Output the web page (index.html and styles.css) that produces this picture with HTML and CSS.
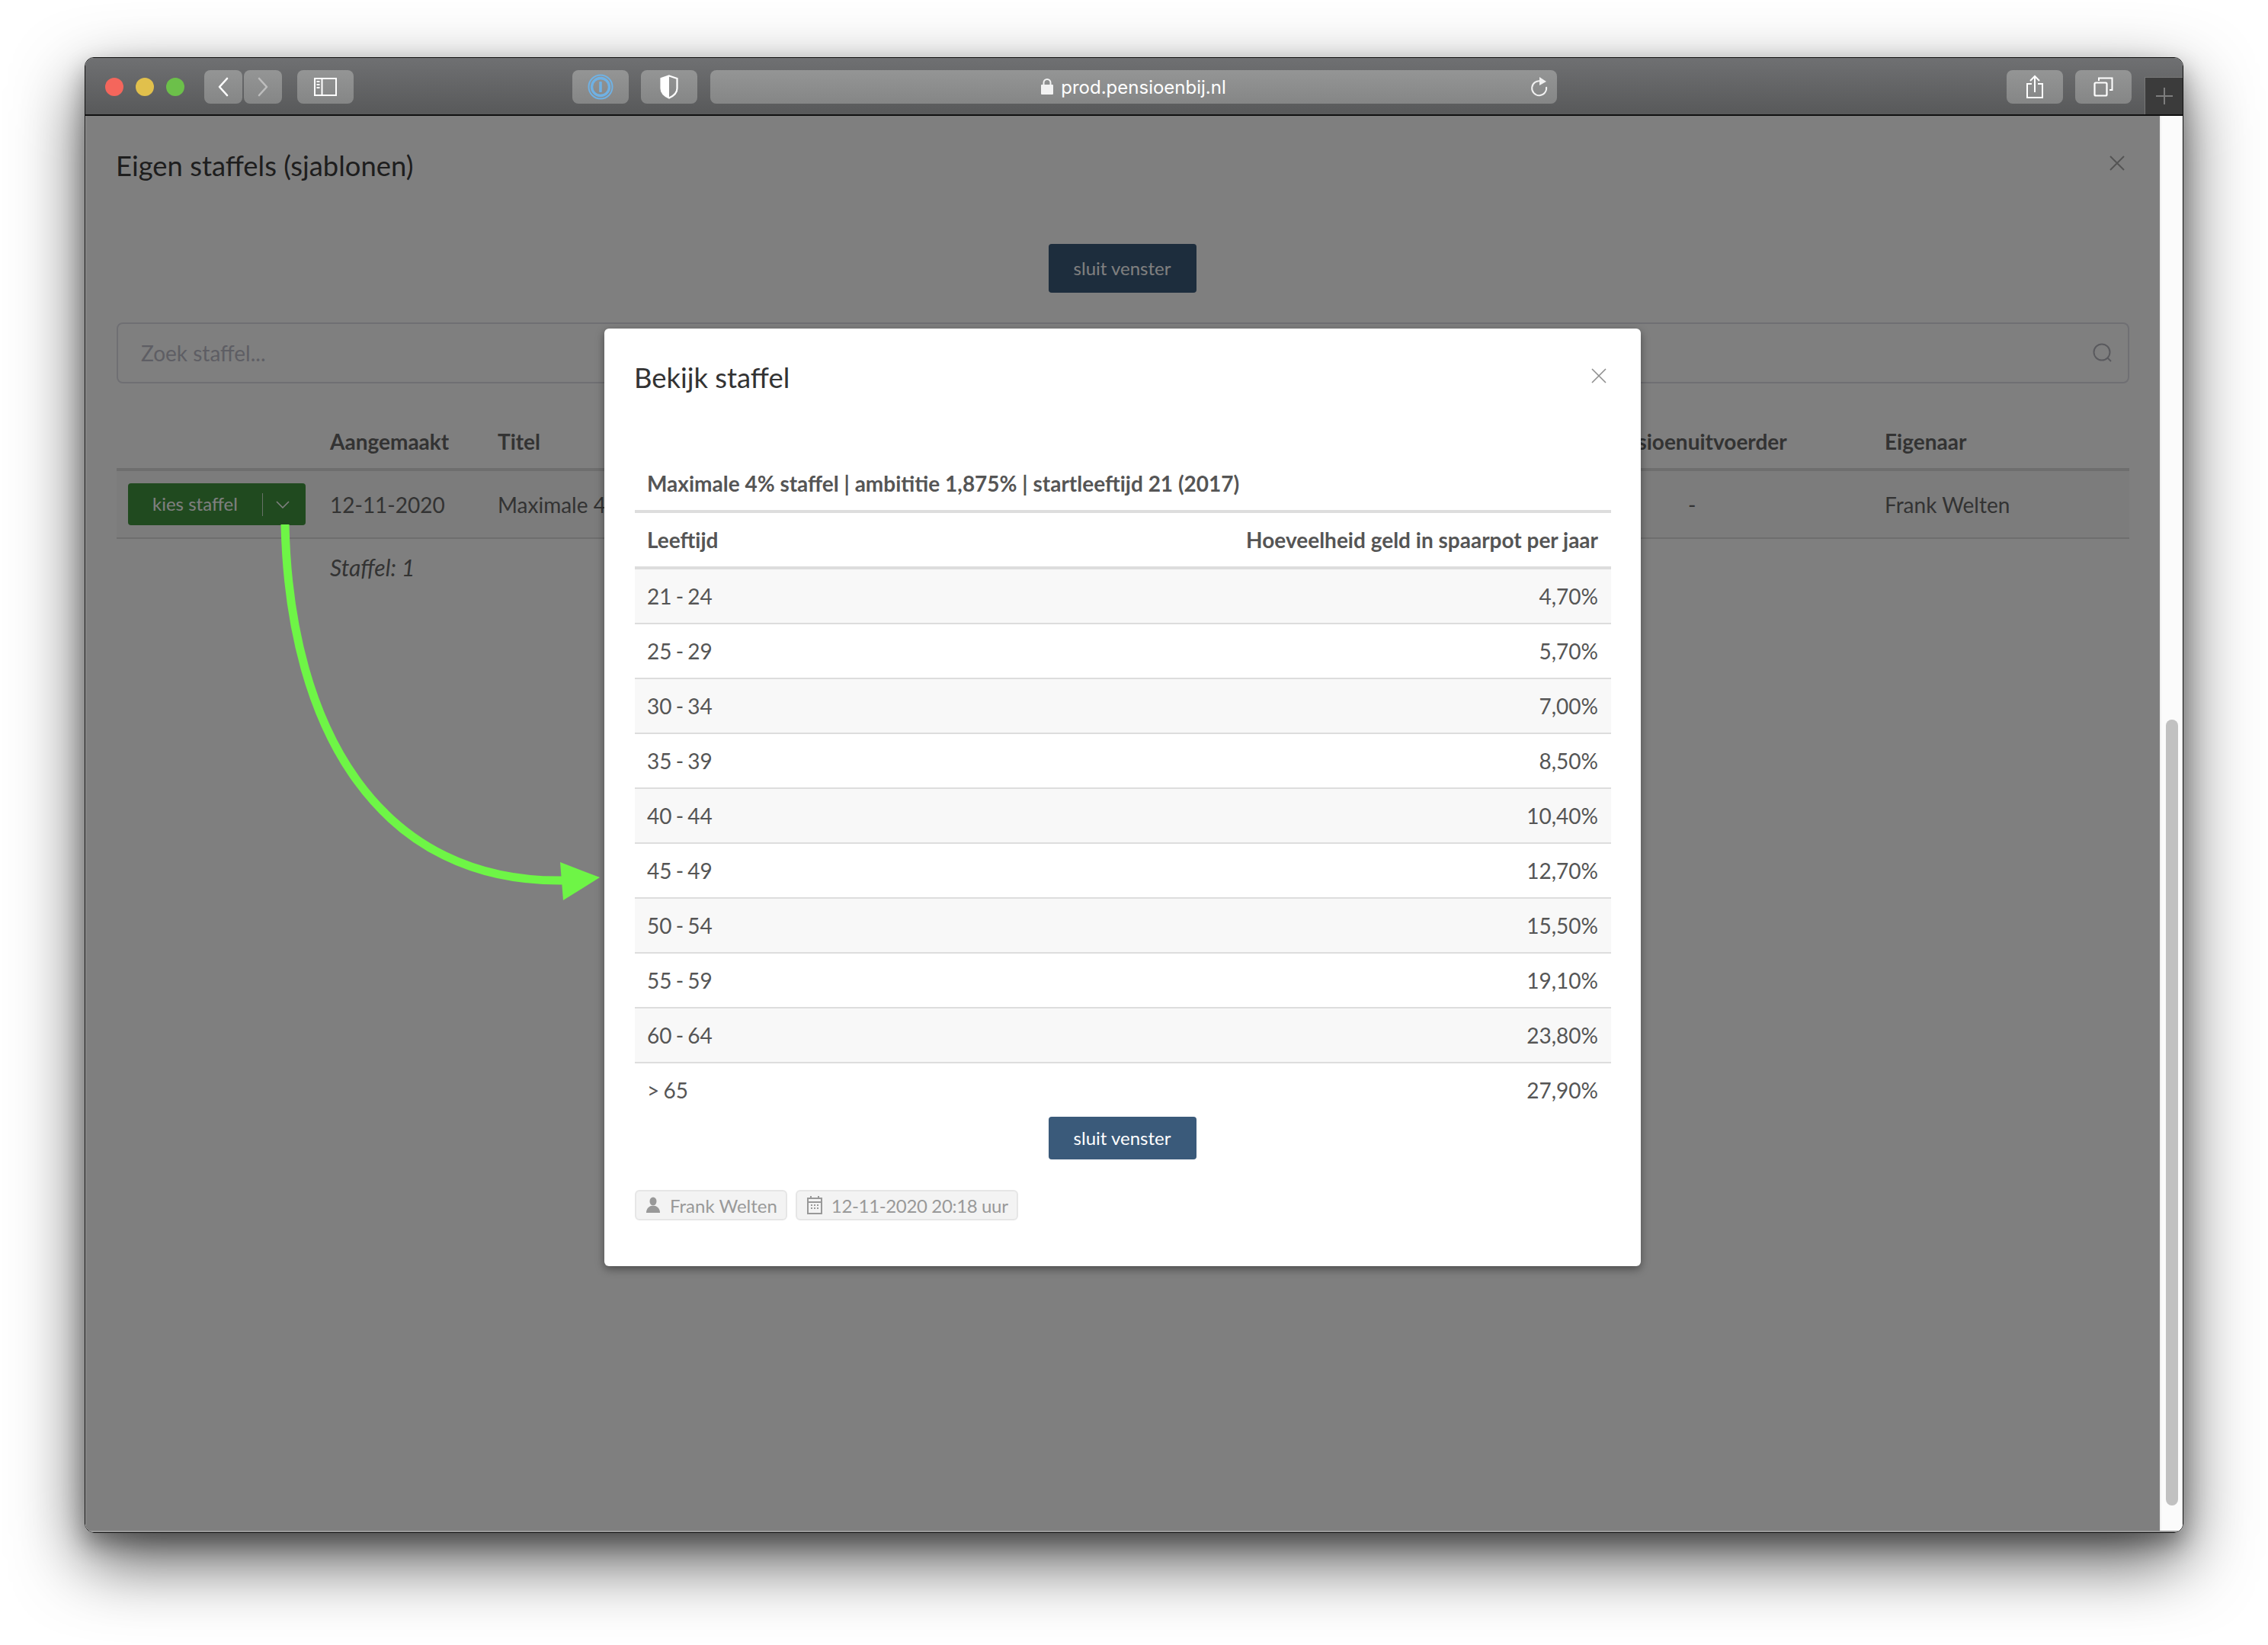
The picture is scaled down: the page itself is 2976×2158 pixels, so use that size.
FILE: index.html
```html
<!DOCTYPE html>
<html lang="nl">
<head>
<meta charset="utf-8">
<title>Bekijk staffel</title>
<link rel="stylesheet" href="styles.css">
</head>
<body>
<div class="window">
  <header class="toolbar">
    <div class="lights"><span class="light red"></span><span class="light yellow"></span><span class="light green"></span></div>
    <div class="nav">
      <button class="tb tb-nav"><svg width="16" height="26" viewBox="0 0 16 26"><path d="M13 2 3 13l10 11" fill="none" stroke="#fff" stroke-width="2.6" stroke-linecap="round" stroke-linejoin="round"/></svg></button>
      <button class="tb tb-nav"><svg width="16" height="26" viewBox="0 0 16 26"><path d="M3 2l10 11L3 24" fill="none" stroke="#bdbdbd" stroke-width="2.6" stroke-linecap="round" stroke-linejoin="round"/></svg></button>
    </div>
    <button class="tb tb-side"><svg width="30" height="24" viewBox="0 0 30 24"><rect x="1" y="1" width="28" height="22" fill="none" stroke="#fff" stroke-width="2"/><path d="M10.5 1v22" stroke="#fff" stroke-width="2"/><path d="M3.5 5h4M3.5 9h4M3.5 13h4" stroke="#fff" stroke-width="2"/></svg></button>
    <button class="tb tb-ext"><svg width="34" height="34" viewBox="0 0 34 34"><circle cx="17" cy="17" r="15.5" fill="none" stroke="#6fb1e4" stroke-width="2"/><circle cx="17" cy="17" r="11.5" fill="none" stroke="#6fb1e4" stroke-width="3.4"/><rect x="15.2" y="10" width="3.6" height="14" rx="1" fill="#6fb1e4"/></svg></button>
    <button class="tb tb-shield"><svg width="24" height="32" viewBox="0 0 24 32"><path d="M12 1.500 22.500 5v13c0 6-5 10-10.500 12.500C6.500 28 1.500 24 1.500 18V5z" fill="none" stroke="#fff" stroke-width="2.200"/><path d="M12 1.500 1.500 5v13c0 6 5 10 10.500 12.500z" fill="#fff"/></svg></button>
    <div class="urlbar">
      <svg class="lock" width="16" height="21" viewBox="0 0 16 21"><path d="M3.500 9V5.500a4.500 4.500 0 0 1 9 0V9" fill="none" stroke="#f2f2f2" stroke-width="2"/><rect y="8" width="16" height="13" rx="1" fill="#f2f2f2"/></svg>
      <span class="url">prod.pensioenbij.nl</span>
      <svg class="reload" width="24" height="28" viewBox="0 0 24 28"><path d="M14 6.500A9.500 9.500 0 1 0 21 14" fill="none" stroke="#f0f0f0" stroke-width="2"/><path d="M12 1l9 6-9 5z" fill="#f0f0f0"/></svg>
    </div>
    <button class="tb tb-share"><svg width="24" height="32" viewBox="0 0 24 32"><path d="M8 12H2v18h20V12h-6" fill="none" stroke="#fff" stroke-width="2"/><path d="M12 23V3M6 8l6-6 6 6" fill="none" stroke="#fff" stroke-width="2"/></svg></button>
    <button class="tb tb-tabs"><svg width="26" height="26" viewBox="0 0 26 26"><rect x="1.500" y="7.500" width="16" height="17" rx="1.500" fill="none" stroke="#fff" stroke-width="2.200"/><path d="M7 5V1.500h17.500V17H21" fill="none" stroke="#fff" stroke-width="2"/></svg></button>
    <div class="newtab"><svg width="22" height="22" viewBox="0 0 22 22"><path d="M11 0v22M0 11h22" stroke="#7d7d7d" stroke-width="2"/></svg></div>
  </header>
  <div class="viewport">
    <main class="page">
      <div class="page-head">
        <h1 class="page-title">Eigen staffels (sjablonen)</h1>
        <svg class="x-icon page-x" width="20" height="20" viewBox="0 0 20 20"><path d="M1 1l18 18M19 1 1 19" stroke="#a9a9a9" stroke-width="2"/></svg>
      </div>
      <div class="center"><button class="btn btn-page">sluit venster</button></div>
      <div class="search">
        <span class="placeholder">Zoek staffel...</span>
        <svg width="26" height="26" viewBox="0 0 26 26"><circle cx="12" cy="12" r="10.500" fill="none" stroke="#b4b4bc" stroke-width="2"/><path d="M19 19l5 5" stroke="#b4b4bc" stroke-width="2"/></svg>
      </div>
      <table class="list">
        <colgroup><col class="c1"><col class="c2"><col class="c3"><col class="c4"><col class="c5"></colgroup>
        <thead>
          <tr><th></th><th>Aangemaakt</th><th>Titel</th><th>Pensioenuitvoerder</th><th>Eigenaar</th></tr>
        </thead>
        <tbody>
          <tr class="striped">
            <td class="cell-btn"><span class="btn-green"><span class="btn-green-label">kies staffel</span><span class="btn-green-caret"><svg width="18" height="10" viewBox="0 0 18 10"><path d="M1 1l8 8 8-8" fill="none" stroke="#fff" stroke-width="1.600"/></svg></span></span></td>
            <td>12-11-2020</td>
            <td>Maximale 4</td>
            <td class="cell-dash">-</td>
            <td>Frank Welten</td>
          </tr>
          <tr class="note-row"><td></td><td colspan="4" class="note">Staffel: 1</td></tr>
        </tbody>
      </table>
    </main>
    <aside class="scrollbar"><span class="thumb"></span></aside>
    <div class="backdrop"></div>
    <section class="modal">
      <div class="modal-head">
        <h2 class="modal-title">Bekijk staffel</h2>
        <svg class="x-icon" width="20" height="20" viewBox="0 0 20 20"><path d="M1 1l18 18M19 1 1 19" stroke="#8e8e8e" stroke-width="1.600"/></svg>
      </div>
      <table class="tiers">
        <thead>
          <tr class="tier-caption"><th colspan="2">Maximale 4% staffel | ambititie 1,875% | startleeftijd 21 (2017)</th></tr>
          <tr class="tier-head"><th>Leeftijd</th><th class="right">Hoeveelheid geld in spaarpot per jaar</th></tr>
        </thead>
        <tbody>
          <tr><td>21 - 24</td><td class="right">4,70%</td></tr>
          <tr><td>25 - 29</td><td class="right">5,70%</td></tr>
          <tr><td>30 - 34</td><td class="right">7,00%</td></tr>
          <tr><td>35 - 39</td><td class="right">8,50%</td></tr>
          <tr><td>40 - 44</td><td class="right">10,40%</td></tr>
          <tr><td>45 - 49</td><td class="right">12,70%</td></tr>
          <tr><td>50 - 54</td><td class="right">15,50%</td></tr>
          <tr><td>55 - 59</td><td class="right">19,10%</td></tr>
          <tr><td>60 - 64</td><td class="right">23,80%</td></tr>
          <tr class="last"><td>&gt; 65</td><td class="right">27,90%</td></tr>
        </tbody>
      </table>
      <div class="center"><button class="btn btn-modal">sluit venster</button></div>
      <div class="tags">
        <span class="tag"><svg width="18" height="22" viewBox="0 0 18 22"><ellipse cx="9" cy="6" rx="4.500" ry="5.500" fill="#999"/><path d="M0 21c0-5 3-8 6-9h6c3 1 6 4 6 9z" fill="#999"/></svg>Frank Welten</span>
        <span class="tag tag-date"><svg width="20" height="24" viewBox="0 0 20 24"><rect x="1" y="3" width="18" height="20" fill="none" stroke="#999" stroke-width="2"/><path d="M1 8h18M5 0v4M15 0v4M5 12h2M9 12h2M13 12h2M5 16h2M9 16h2M13 16h2" stroke="#999" stroke-width="2"/></svg>12-11-2020 20:18 uur</span>
      </div>
    </section>
  </div>
</div>
<svg class="arrow" width="2976" height="2158" viewBox="0 0 2976 2158"><path d="M374 688C380 960 500 1160 742 1155" fill="none" stroke="#6ef546" stroke-width="11"/><path d="M735 1131 787 1151 739 1181z" fill="#6ef546"/></svg>
</body>
</html>
```

FILE: styles.css
```css
* { box-sizing: border-box; }
html, body { margin: 0; height: 2158px; }
body {
  position: relative;
  padding: 75px 111px 148px;
  background: #fff;
  overflow: hidden;
  font-family: Lato, "Open Sans", sans-serif;
  font-size: 28px;
  color: #555;
}
.window {
  display: flex;
  flex-direction: column;
  height: 1936px;
  border: 1px solid #111;
  border-radius: 12px;
  overflow: hidden;
  box-shadow: 0 36px 90px rgba(0, 0, 0, .68), 0 14px 30px rgba(0, 0, 0, .3);
}
.toolbar {
  position: relative;
  display: flex;
  align-items: center;
  flex: 0 0 76px;
  padding-top: 1px;
  background: linear-gradient(#6f7072, #58595a);
  border-bottom: 2px solid #111;
}
.lights { display: flex; gap: 16px; margin-left: 26px; }
.light { width: 24px; height: 24px; border-radius: 50%; }
.red { background: #f4665c; }
.yellow { background: #e1c04c; }
.green { background: #6cc04a; }
.nav { display: flex; gap: 2px; margin-left: 26px; }
.tb {
  display: flex;
  align-items: center;
  justify-content: center;
  height: 44px;
  padding: 0;
  border: 0;
  border-radius: 8px;
  background: linear-gradient(#949595, #858686);
}
.tb-nav { width: 50px; }
.tb-side { width: 74px; margin-left: 20px; }
.tb-ext { width: 74px; margin-left: 287px; }
.tb-shield { width: 74px; margin-left: 16px; }
.urlbar {
  display: flex;
  align-items: center;
  justify-content: center;
  position: relative;
  width: 1112px;
  height: 44px;
  margin-left: 17px;
  border-radius: 8px;
  background: linear-gradient(#949595, #858686);
}
.lock { margin-right: 10px; }
.url { padding-top: 2px; font-family: Inter, "Liberation Sans", sans-serif; font-size: 24px; color: #fff; }
.reload { position: absolute; right: 11px; top: 8px; }
.tb-share { width: 74px; margin-left: 590px; }
.tb-tabs { width: 74px; margin-left: 16px; }
.newtab {
  display: flex;
  align-items: center;
  justify-content: center;
  align-self: flex-end;
  width: 50px;
  height: 49px;
  margin-left: 17px;
  background: #3b3b3b;
  border-left: 1px solid #777;
  border-top: 1px solid #777;
}
.viewport {
  position: relative;
  display: flex;
  flex: 1;
  min-height: 0;
  border-style: solid;
  border-color: #9a9a9a;
  border-width: 0 0 2px 1px;
}
.page { flex: 1; min-width: 0; padding: 0 40px 0 40px; background: #fff; overflow: hidden; }
.page-head { display: flex; align-items: center; justify-content: space-between; padding: 41px 6px 0 0; }
.page-title { margin: 0 0 0 -1px; font-size: 36.400px; line-height: 48px; font-weight: 400; color: #3c3c3c; }
.page-x { margin-top: -6px; }
.center { display: flex; justify-content: center; padding-right: 2px; }
.btn {
  width: 194px;
  padding: 0 0 2px;
  border: 0;
  border-radius: 4px;
  background: #3a5a7a;
  color: #fff;
  font-family: Lato, sans-serif;
  font-size: 24px;
}
.btn-page { height: 64px; margin-top: 79px; }
.search {
  display: flex;
  align-items: center;
  justify-content: space-between;
  height: 80px;
  margin-top: 39px;
  padding: 0 20px 0 30px;
  border: 2px solid #dedee6;
  border-radius: 8px;
}
.placeholder { color: #bcbcc8; }
.list { width: 100%; margin-top: 37px; border-collapse: separate; border-spacing: 0; table-layout: fixed; }
.c1 { width: 264px; }
.c2 { width: 220px; }
.c3 { width: 1448px; }
.c4 { width: 372px; }
.list th, .list td { padding: 0 16px; text-align: left; white-space: nowrap; }
.list th { height: 78px; padding-top: 4px; border-bottom: 4px solid #ddd; font-weight: 700; color: #666; }
.list td { height: 89px; border-bottom: 2px solid #ddd; color: #666; }
.list .cell-btn { padding: 0 0 0 15px; }
.striped td { background: #f8f8f8; }
.list .cell-dash { padding-left: 130px; }
.list .note-row td { height: 76px; padding-bottom: 2px; border: 0; }
.list .note { font-size: 30px; font-style: italic; }
.btn-green {
  display: flex;
  align-items: center;
  width: 233px;
  height: 55px;
  border-radius: 4px;
  background: #40943e;
  color: #fff;
  font-size: 24px;
}
.btn-green-label { width: 176px; padding: 0 0 2px 32px; }
.btn-green-caret {
  display: flex;
  align-items: center;
  justify-content: center;
  width: 52px;
  height: 30px;
  border-left: 1px solid #cfe3ce;
}
.scrollbar { position: relative; flex: 0 0 30px; background: #fbfbfb; border-left: 2px solid #f0f0f0; }
.thumb { position: absolute; left: 6px; top: 792px; width: 16px; height: 1031px; border-radius: 8px; background: #c1c1c1; }
.backdrop { position: absolute; left: 0; top: 0; bottom: 0; right: 30px; background: rgba(0, 0, 0, .5); }
.modal {
  position: absolute;
  left: 680px;
  top: 279px;
  width: 1360px;
  height: 1230px;
  padding: 41px 39px 0 40px;
  background: #fff;
  border-radius: 6px;
  box-shadow: 0 4px 12px rgba(0, 0, 0, .4);
}
.modal-head { display: flex; align-items: center; justify-content: space-between; padding-right: 6px; }
.modal-title { margin: -1px 0 1px -1px; font-size: 36.400px; line-height: 48px; font-weight: 400; color: #333; }
.modal-head .x-icon { margin-top: -6px; }
.tiers { width: 100%; border-collapse: separate; border-spacing: 0; margin-top: 84px; }
.tiers th, .tiers td { padding: 0 17px 0 16px; text-align: left; }
.tiers .right { text-align: right; }
.tier-caption th { height: 69px; padding-bottom: 5px; border-bottom: 4px solid #ddd; }
.tier-head th { height: 74px; border-bottom: 4px solid #ddd; }
.tiers td { height: 72px; border-bottom: 2px solid #ddd; word-spacing: -2px; }
.tiers tbody tr:nth-child(odd) td { background: #f8f8f8; }
.tiers .last td { height: 70px; border-bottom: 0; background: #fff; }
.btn-modal { height: 56px; }
.tags { display: flex; gap: 11px; margin-top: 40px; }
.tag {
  display: flex;
  align-items: center;
  gap: 13px;
  height: 40px;
  padding: 0 11px 0 13px;
  background: #f3f3f3;
  border: 2px solid #e6e6e6;
  border-radius: 6px;
  font-size: 24px;
  color: #999;
}
.tag-date { letter-spacing: -.35px; gap: 12px; }
.arrow { position: absolute; left: 0; top: 0; pointer-events: none; }
```
